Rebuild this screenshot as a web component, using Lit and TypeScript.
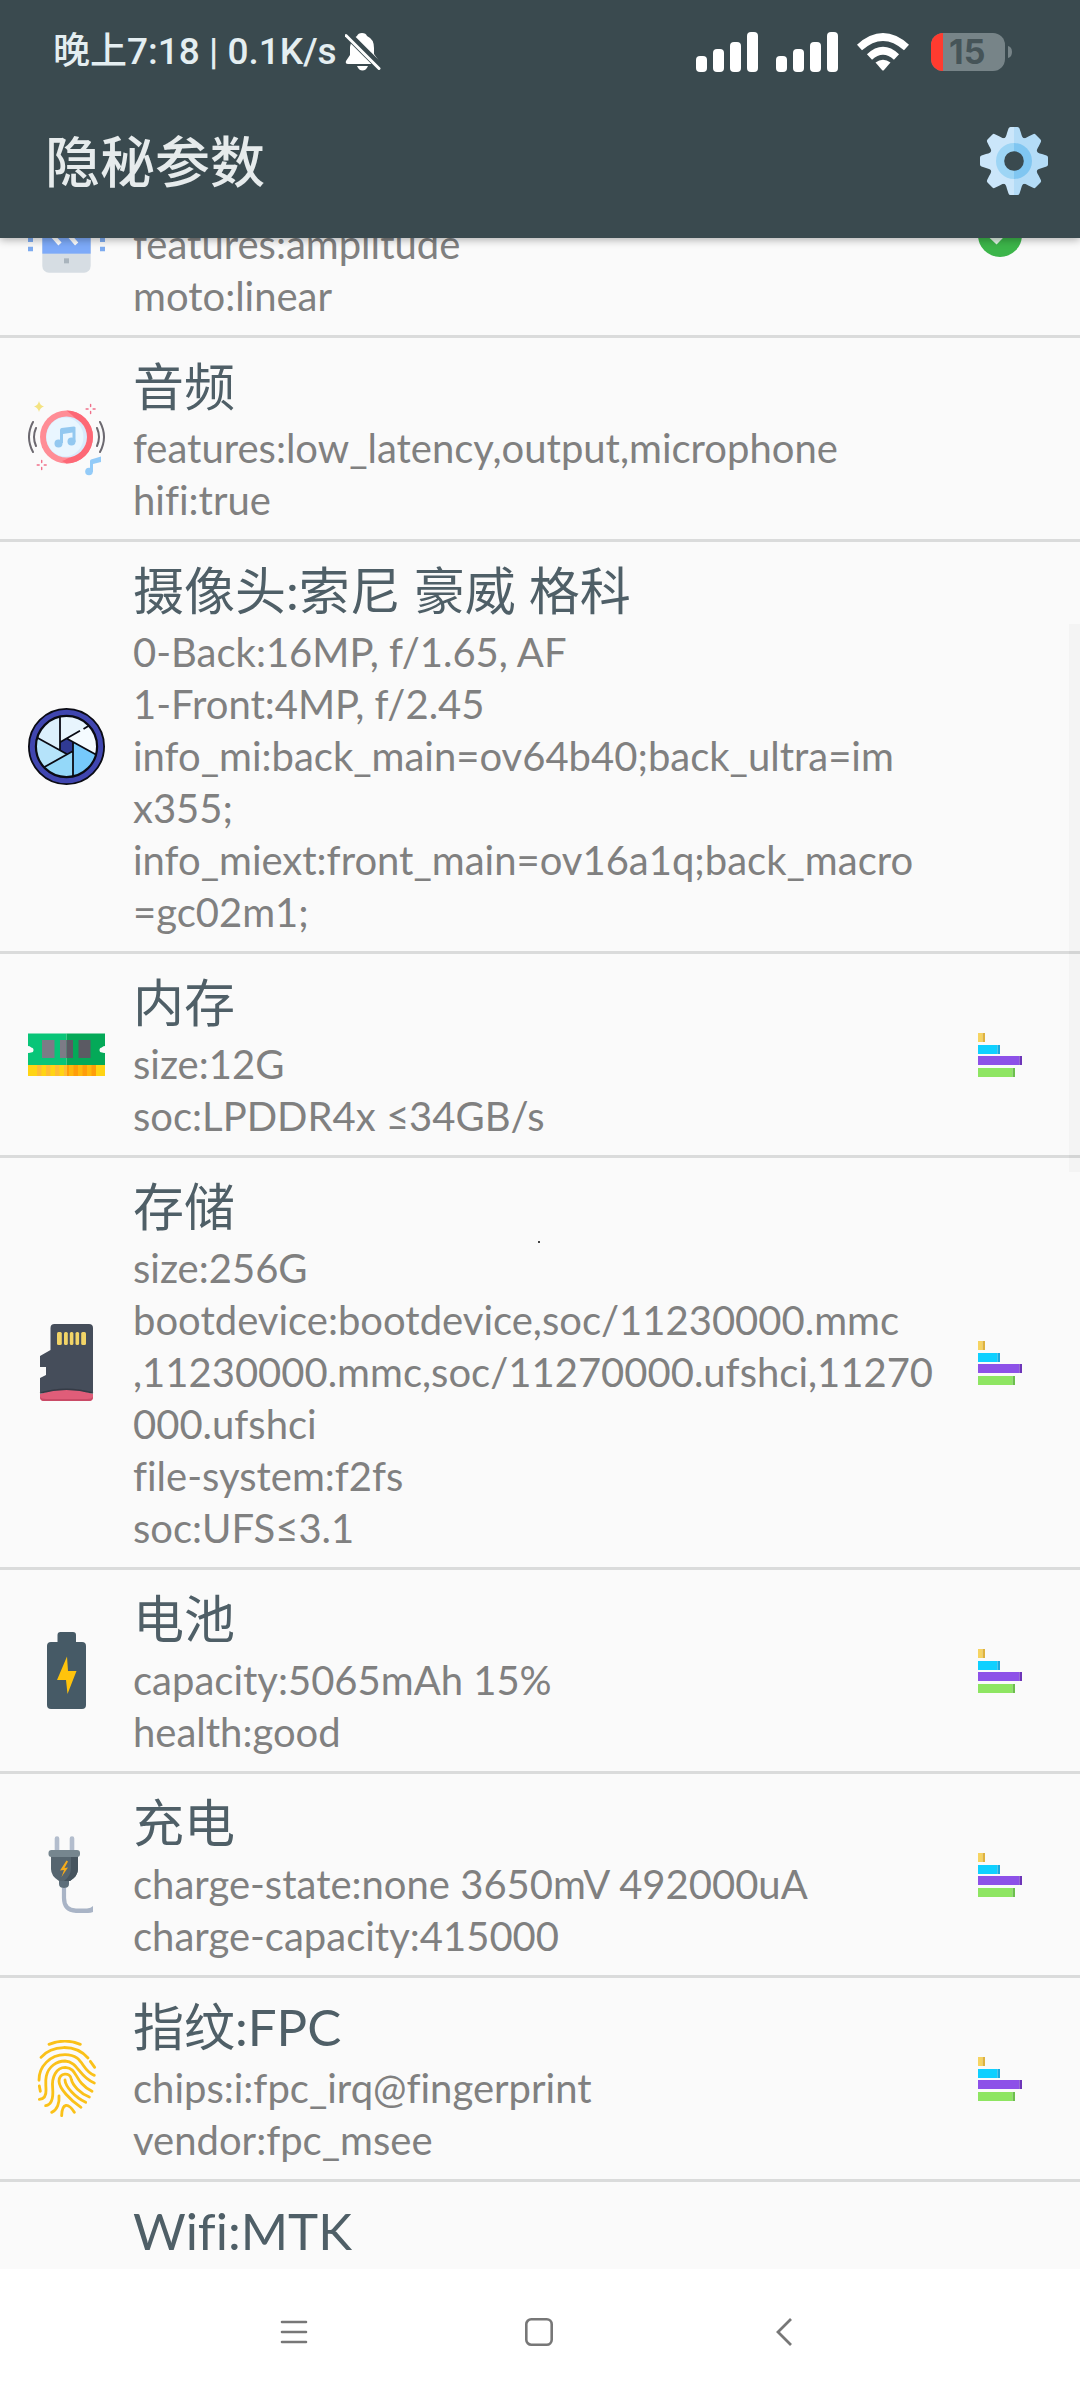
import { LitElement, html, svg, css, nothing } from "lit";
import { customElement, property } from "lit/decorators.js";

type Row = { icon: string; title?: string; lines: string[]; action?: "chart" | "ok"; part?: "first" };

const rows: Row[] = [
  { icon: "vibrate", lines: ["features:amplitude", "moto:linear"], action: "ok", part: "first" },
  { icon: "audio", title: "音频", lines: ["features:low_latency,output,microphone", "hifi:true"] },
  {
    icon: "camera",
    title: "摄像头:索尼 豪威 格科",
    lines: [
      "0-Back:16MP, f/1.65, AF",
      "1-Front:4MP, f/2.45",
      "info_mi:back_main=ov64b40;back_ultra=im",
      "x355;",
      "info_miext:front_main=ov16a1q;back_macro",
      "=gc02m1;",
    ],
  },
  { icon: "ram", title: "内存", lines: ["size:12G", "soc:LPDDR4x ≤34GB/s"], action: "chart" },
  {
    icon: "sd",
    title: "存储",
    lines: [
      "size:256G",
      "bootdevice:bootdevice,soc/11230000.mmc",
      ",11230000.mmc,soc/11270000.ufshci,11270",
      "000.ufshci",
      "file-system:f2fs",
      "soc:UFS≤3.1",
    ],
    action: "chart",
  },
  { icon: "battery", title: "电池", lines: ["capacity:5065mAh 15%", "health:good"], action: "chart" },
  { icon: "plug", title: "充电", lines: ["charge-state:none 3650mV 492000uA", "charge-capacity:415000"], action: "chart" },
  { icon: "finger", title: "指纹:FPC", lines: ["chips:i:fpc_irq@fingerprint", "vendor:fpc_msee"], action: "chart" },
  { icon: "", title: "Wifi:MTK", lines: [] },
];

const sparkle = (x: number, y: number) => svg`
  <g transform="translate(${x} ${y})" stroke="#f0708a" stroke-width="1.4" stroke-linecap="round">
    <path d="M0-4.5V-2.5M0 4.5V2.5M-4.5 0H-2.5M4.5 0H2.5"/></g>`;

const icons: Record<string, { box: string; art: unknown }> = {
  vibrate: {
    box: "84 -72 231 231",
    art: svg`
      <rect x="127" y="-72" width="145" height="230" rx="20" fill="#d6dde3"/>
      <rect x="127" y="-30" width="145" height="131" fill="#7daaf9"/>
      <path d="M120 5L180 72M172 5L230 72" stroke="#fff" stroke-width="13"/>
      <rect x="192" y="115" width="15" height="15" fill="#a9b4bd"/>
      <path d="M91.500 53v13M91.500 80v14M307.500 53v13M307.500 80v14" stroke="#7dabf0" stroke-width="15"/>`,
  },
  audio: {
    box: "0 0 77 77",
    art: svg`
      <circle cx="38.500" cy="37" r="26.500" fill="#ff8d96"/>
      <path d="M38.500 10.500A26.500 26.500 0 0 1 38.500 63.500L34 61A27 27 0 0 0 44 15Z" fill="#fd6876"/>
      <circle cx="38.500" cy="37" r="20.500" fill="#d8eafc"/>
      <ellipse cx="37" cy="37" rx="18.500" ry="19.500" fill="#e9f6ff"/>
      <g fill="#93c8f0">
        <circle cx="30.500" cy="43.500" r="4"/><circle cx="43.500" cy="41.500" r="4"/>
        <path d="M32 43V30Q32 28.500 33.500 28L46 26.500Q48 26.500 47.500 28V42H44.500V32.500L35 34V43Z"/>
      </g>
      <g fill="none" stroke="#6c6970" stroke-width="2" stroke-linecap="round">
        <path d="M5 22Q-3 37 5 52M8 28Q4 37 8 46M72 22Q80 37 72 52M69 28Q73 37 69 46"/>
      </g>
      <path d="M11 1Q12 5.500 16 6.500Q12 7.500 11 12Q10 7.500 6 6.500Q10 5.500 11 1Z" fill="#f4e382"/>
      ${sparkle(62.6, 9)}${sparkle(13.7, 65)}
      <g fill="#93cbf8"><circle cx="61" cy="71.500" r="3.800"/>
        <path d="M62 71V61Q62 60 63 59.500L73 56.500V62L65 64V72Z"/></g>`,
  },
  camera: {
    box: "0 0 77 77",
    art: svg`
      <circle cx="38.500" cy="38.500" r="31" fill="#e8f5fd"/>
      <path d="M38.700 30.500L62 17A31 31 0 0 1 69 47Z" fill="#f5fbff"/>
      <path d="M38.700 30.500L69 47A31 31 0 0 1 45 69.500V35Z" fill="#76c9fb"/>
      <path d="M45 42V69.500A31 31 0 0 1 16 59L45 43Z" fill="#94d8f9"/>
      <path d="M38.700 46L16 59.300A31 31 0 0 1 8.500 29.700L38.700 46Z" fill="#b5e3fa"/>
      <path d="M32 43L8.500 29.700A31 31 0 0 1 32 7.700Z" fill="#dcf0fc"/>
      <path d="M32 34.300L38.700 30.500L45 34.500V42.500L38.700 46L32 42.500Z" fill="#303a94"/>
      <g stroke="#0a0b14" stroke-width="1.800" fill="none">
        <path d="M32 7.700V43M62 17L55.500 21M52 22.800L32 34.300M68.700 47L38.700 30.500M45 69V34M16 59.300L45 43M9.300 29.700L38.700 46"/>
        <circle cx="38.500" cy="38.500" r="34" stroke-width="9"/>
      </g>
      <circle cx="38.500" cy="38.500" r="34.200" fill="none" stroke="#4046b0" stroke-width="5"/>`,
  },
  ram: {
    box: "0 0 77 77",
    art: svg`
      <path d="M0 17.500H38.500V49.500H0V37A3.500 3.500 0 0 0 0 30Z" fill="#08c578"/>
      <path d="M38.500 17.500H77V30A3.500 3.500 0 0 0 77 37V49.500H38.500Z" fill="#04a958"/>
      <path d="M0 36.500H3A2.500 2.500 0 0 0 3 31.500H0ZM77 36.500H74A2.500 2.500 0 0 1 74 31.500H77Z" fill="#fafafa"/>
      <path d="M14 24H26.500V42H14ZM32 24H38.500V42H32Z" fill="#7d7b86"/>
      <path d="M38.500 24H45V42H38.500ZM50.500 24H62.500V42H50.500Z" fill="#5b5a63"/>
      <path d="M0 49H77V60H0Z" fill="#ffd414"/>
      <path d="M9 49h4.500v11H9ZM18 49h4.500v11H18ZM27 49h4.500v11H27ZM36 49h3v11h-3Z" fill="#ffbd33"/>
      <path d="M39 49H68V60H39Z" fill="#ffb70c"/>
      <path d="M39 49h2v11h-2ZM45.500 49H50v11h-4.500ZM54.500 49H59v11h-4.500ZM63.500 49H68v11h-4.500Z" fill="#ff9d0a"/>`,
  },
  sd: {
    box: "0 0 77 77",
    art: svg`
      <path d="M12 68V54L18 51V43H12V32L22.500 26V4Q22.500 0 26.500 0H61Q65 0 65 4V68Z" fill="#454d5a"/>
      <path d="M12 70Q38.500 60 65 70V73Q65 77 61 77H16Q12 77 12 73Z" fill="#e05d79"/>
      <path d="M12 72.500Q12 77 16 77H61Q65 77 65 72.500Q64 75 59 75H18Q13 75 12 72.500Z" fill="#c94a66"/>
      <path d="M12 69Q38.500 61.500 65 69" fill="none" stroke="#353b46" stroke-width="1.500"/>
      <g fill="#f2d467"><rect x="29" y="8" width="4.800" height="13" rx="1.500"/><rect x="36" y="8" width="3.800" height="13" rx="1.500"/><rect x="41.800" y="8" width="3.600" height="13" rx="1.500"/><rect x="47.500" y="8" width="3.600" height="13" rx="1.500"/><rect x="53.200" y="8" width="4.800" height="13" rx="1.500"/></g>`,
  },
  battery: {
    box: "0 0 77 77",
    art: svg`
      <path d="M29.500 10V3Q29.500 0 32.500 0H45Q48 0 48 3V10H54Q58 10 58 14V73Q58 77 54 77H23Q19 77 19 73V14Q19 10 23 10Z" fill="#465a66"/>
      <path d="M39 24.500L29 48H38L39.500 62L48.500 39H40Z" fill="#ffc30c"/>`,
  },
  plug: {
    box: "0 0 77 77",
    art: svg`
      <path d="M29 2.500V14M44 2.500V14" stroke="#b3bdcd" stroke-width="4.600" stroke-linecap="round"/>
      <path d="M33.900 52H38.100V62Q38.100 72.400 48 72.400H59Q63 72.400 65 70V76Q63 77 60 77H48Q33.900 76 33.900 62Z" fill="#a9b4c6"/>
      <path d="M31 44H41V48Q41 52 36 52Q31 52 31 48Z" fill="#5e6f7b"/>
      <path d="M23 20H50V33Q50 40 42 45H31Q23 40 23 33Z" fill="#56656f"/>
      <path d="M43 20H50V33Q50 40 42 45H36Q43 40 43 32Z" fill="#46545e"/>
      <rect x="20.500" y="14" width="31.500" height="7" rx="3" fill="#76868f"/>
      <path d="M38.500 24.500L32 34.500L36 34L33.500 41L40 31.500L36.500 32L40 25.500Z" fill="#f6ab1a"/>`,
  },
  finger: {
    box: "84 240 231 231",
    art: svg`
      <g fill="none" stroke="#fac119" stroke-width="8.500" stroke-linecap="round">
        <path d="M147 253Q195 234 241 253"/>
        <path d="M123 292C155 255 225 250 264 294"/>
        <path d="M271 304L284 322"/>
        <path d="M117 361C116 320 150 284 195 284C252 284 242 330 283 346"/>
        <path d="M118 378L121 394"/>
        <path d="M118 418C130 417 139 410 138 390C138 375 135 365 139 348C145 320 170 303 195 303C235 305 235 350 283 369"/>
        <path d="M137 437C155 434 160 410 158 385C154 350 170 322 196 322C235 325 220 365 276 394"/>
        <path d="M155 457C172 450 179 428 177 408"/>
        <path d="M243 442C210 420 178 385 177 364C177 336 211 336 214 358C217 375 240 400 268 411"/>
        <path d="M195 360C196 380 225 412 257 427"/>
        <path d="M185 467C186 428 205 428 223 457"/>
      </g>`,
  },
};

@customElement("device-icon")
class DeviceIcon extends LitElement {
  @property() name = "";
  static styles = css`
    :host { display: block; }
    .art { display: block; width: 77px; height: 77px; }
  `;
  render() {
    const i = icons[this.name];
    return i ? html`<svg class="art" viewBox=${i.box} aria-hidden="true">${i.art}</svg>` : nothing;
  }
}

@customElement("status-bar")
class StatusBar extends LitElement {
  static styles = css`
    :host { display: flex; justify-content: space-between; align-items: center; height: 104px; padding: 0 67px 0 53px; }
    .left, .right { display: flex; align-items: center; }
    .left { gap: 8px; font-family: Roboto, "Noto Sans CJK SC", sans-serif; font-size: 37px; line-height: 48px; font-weight: 500; color: #e4eef1; white-space: nowrap; }
    .right { gap: 18px; }
    .art { display: block; }
    .battery { position: relative; display: flex; align-items: center; margin-left: 3px; }
    .level { position: absolute; left: 18px; font-family: Inter, "Liberation Sans", sans-serif; font-size: 34px; line-height: 38px; font-weight: 700; color: #465458; }
  `;
  private signal() {
    return html`<svg class="art" width="62" height="40" viewBox="0 0 62 40" fill="#fff" aria-hidden="true">
      <rect x="0" y="24" width="11" height="16" rx="4"/><rect x="17" y="17" width="11" height="23" rx="4"/>
      <rect x="34" y="10" width="11" height="30" rx="4"/><rect x="51" y="0" width="11" height="40" rx="4"/></svg>`;
  }
  render() {
    return html`
      <div class="left"><span>晚上7:18 | 0.1K/s</span>
        <svg class="art" width="36" height="38" viewBox="0 0 36 38" aria-hidden="true">
          <path d="M17 0Q21 0 22 3Q29 6 29 15V21L34 28Q35 31 32 31H3Q0 31 1 28L5 22V14Q6 6 12 3Q13 0 17 0ZM12 33H23Q21 37.500 17.500 37.500Q14 37.500 12 33Z" fill="#fff"/>
          <path d="M1 0L36 35" stroke="#3a4a4f" stroke-width="8"/>
          <path d="M1 2.500L34 35.500" stroke="#fff" stroke-width="3" stroke-linecap="round"/>
        </svg>
      </div>
      <div class="right">${this.signal()}${this.signal()}
        <svg class="art" width="54" height="38" viewBox="0 0 54 38" aria-hidden="true">
          <g fill="none" stroke="#fff" stroke-width="7.500"><path d="M3.500 14.500Q27 -6.500 50.500 14.500"/><path d="M13.500 24Q27 11.500 40.500 24"/></g>
          <path d="M19.500 29.500Q27 24 34.500 29.500L28 37Q27 38 26 37Z" fill="#fff"/>
        </svg>
        <div class="battery">
          <svg class="art" width="82" height="38" viewBox="0 0 82 38" aria-hidden="true">
            <rect width="74" height="38" rx="12" fill="#778488"/>
            <path d="M12 0H12V38H12A12 12 0 0 1 0 26V12A12 12 0 0 1 12 0Z" fill="#ff3b2f"/>
            <path d="M77 13Q81 14 81 19Q81 24 77 25Z" fill="#778488"/>
          </svg>
          <span class="level">15</span>
        </div>
      </div>`;
  }
}

const teeth = [0, 45, 90, 135, 180, 225, 270, 315];
const gearShape = (fill: string, clip: string) => svg`
  <g fill=${fill} clip-path=${clip}>
    <circle cx="34" cy="34" r="25"/>
    ${teeth.map((a) => svg`<path transform="rotate(${a} 34 34)" d="M23 13Q26 11 27 6L28.500 1.500Q29 0 30.500 0H37.500Q39 0 39.500 1.500L41 6Q42 11 45 13Z"/>`)}
  </g>`;

@customElement("app-root")
class AppRoot extends LitElement {
  static styles = css`
    :host {
      display: flex; flex-direction: column; height: 100vh; overflow: hidden;
      background: #fafafa; font-family: Lato, "Noto Sans CJK SC", sans-serif; font-variant-ligatures: none;
    }
    .top { position: relative; z-index: 1; flex: none; background: #3a4a4f; box-shadow: 0 2px 8px rgba(0, 0, 0, 0.3); }
    .bar { display: flex; align-items: center; justify-content: space-between; height: 134px; padding: 0 32px 20px 45px; box-sizing: border-box; }
    .heading { margin: 0; font-size: 55px; line-height: 72px; font-weight: 500; color: #e6ebec; }
    .gear { display: block; padding: 0; border: 0; background: none; }
    .art { display: block; }
    .content { position: relative; flex: 1; min-height: 0; overflow: hidden; }
    .list { margin: -104px 0 0; padding: 0; list-style: none; }
    .row { display: grid; grid-template-columns: 105px 1fr 160px; align-items: center; border-bottom: 3px solid #dadbdb; }
    .row.first { min-height: 201px; }
    .row.first .body { align-self: end; }
    .mark { justify-self: end; }
    .body { padding: 14px 0 13px 28px; min-width: 0; }
    .title { margin: 0; font-size: 51px; line-height: 70px; font-weight: 400; color: #4f5f67; }
    .line { margin: 0; font-size: 40px; line-height: 52px; color: #808080; white-space: nowrap; }
    .action { justify-self: center; }
    .thumb { position: absolute; top: 386px; right: 0; width: 11px; height: 548px; background: rgba(0, 0, 0, 0.025); }
    .speck { position: absolute; top: 1003px; left: 50%; margin-left: -2px; width: 2px; height: 2px; background: #444; }
    .nav { flex: none; display: flex; justify-content: center; height: 131px; background: #fff; }
    .key { display: grid; place-items: center; width: 245px; padding: 0 3px 5px 0; border: 0; background: none; }
  `;
  private action(kind: Row["action"]) {
    if (kind === "chart")
      return html`<svg class="art" width="44" height="44" viewBox="0 0 44 44" aria-hidden="true">
        <path d="M0 0H4.500V9H0Z" fill="#f6d462"/><path d="M4.500 0H7V9H4.500Z" fill="#deb23e"/>
        <path d="M0 12H19.500V21H0Z" fill="#0fd0ff"/><path d="M19.500 12H22V21H19.500Z" fill="#1ba8dd"/>
        <path d="M0 23H41.500V32H0Z" fill="#8d51e8"/><path d="M41.500 23H44V32H41.500Z" fill="#6d35b8"/>
        <path d="M0 35H34.500V44H0Z" fill="#8ee562"/><path d="M34.500 35H37V44H34.500Z" fill="#6cbf4c"/></svg>`;
    if (kind === "ok")
      return html`<svg class="art" width="44" height="44" viewBox="0 0 44 44" aria-hidden="true">
        <circle cx="22" cy="22" r="22" fill="#3cb54a"/>
        <path d="M10 20L18.500 28L34 12" fill="none" stroke="#dff2e4" stroke-width="5"/></svg>`;
    return nothing;
  }
  render() {
    return html`
      <header class="top">
        <status-bar></status-bar>
        <div class="bar">
          <h1 class="heading">隐秘参数</h1>
          <button class="gear" type="button" aria-label="设置">
            <svg class="art" width="68" height="68" viewBox="0 0 68 68" aria-hidden="true">
              <clipPath id="l"><path d="M0 0H34V68H0Z"/></clipPath>
              <clipPath id="r"><path d="M34 0H68V68H34Z"/></clipPath>
              ${gearShape("#cbe6fa", "url(#l)")}${gearShape("#b4dcf7", "url(#r)")}
              <path d="M34 16A18 18 0 0 0 34 52Z" fill="#9dd5f5"/><path d="M34 16A18 18 0 0 1 34 52Z" fill="#80c6f1"/>
              <circle cx="34" cy="34" r="9.800" fill="#3a4a4f"/>
            </svg>
          </button>
        </div>
      </header>
      <main class="content">
        <ul class="list">
          ${rows.map((r) => html`<li class="row ${r.part ?? ""}">
            <device-icon class="mark" name=${r.icon}></device-icon>
            <div class="body">
              ${r.title ? html`<h2 class="title">${r.title}</h2>` : nothing}
              ${r.lines.map((l) => html`<p class="line">${l}</p>`)}
            </div>
            <div class="action">${this.action(r.action)}</div>
          </li>`)}
        </ul>
        <div class="thumb"></div>
        <div class="speck"></div>
      </main>
      <nav class="nav">
        <button class="key" type="button" aria-label="菜单"><svg class="art" width="28" height="28" viewBox="0 0 28 28" fill="none" stroke="#777" stroke-width="2.600" stroke-linecap="round"><path d="M2 4H26M2 14H26M2 24H26"/></svg></button>
        <button class="key" type="button" aria-label="主页"><svg class="art" width="28" height="28" viewBox="0 0 28 28" fill="none" stroke="#777" stroke-width="2.600"><rect x="1.300" y="1.300" width="25.400" height="25.400" rx="5"/></svg></button>
        <button class="key" type="button" aria-label="返回"><svg class="art" width="28" height="28" viewBox="0 0 28 28" fill="none" stroke="#777" stroke-width="2.800"><path d="M21 1L8 14L21 27"/></svg></button>
      </nav>`;
  }
}
